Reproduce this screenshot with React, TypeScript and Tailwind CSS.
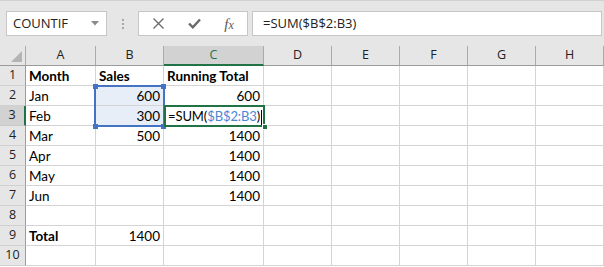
import React from 'react';

const cols = ['A', 'B', 'C', 'D', 'E', 'F', 'G', 'H'];

type Cell = { v?: string; bold?: boolean; right?: boolean };

const rows: Cell[][] = [
  [{ v: 'Month', bold: true }, { v: 'Sales', bold: true }, { v: 'Running Total', bold: true }],
  [{ v: 'Jan' }, { v: '600', right: true }, { v: '600', right: true }],
  [{ v: 'Feb' }, { v: '300', right: true }, {}],
  [{ v: 'Mar' }, { v: '500', right: true }, { v: '1400', right: true }],
  [{ v: 'Apr' }, {}, { v: '1400', right: true }],
  [{ v: 'May' }, {}, { v: '1400', right: true }],
  [{ v: 'Jun' }, {}, { v: '1400', right: true }],
  [{}, {}, {}],
  [{ v: 'Total', bold: true }, { v: '1400', right: true }, {}],
  [{}, {}, {}],
];

const ui = "font-['Open_Sans',sans-serif]";
const cellFont = "font-['Lato',sans-serif]";

export default function App() {
  return (
    <div className="relative w-[604px] h-[267px] overflow-hidden bg-white">
      {/* Toolbar */}
      <div className={`h-[46px] bg-[#e6e6e6] border-t border-[#d2d2d2] flex items-start pt-[10px] ${ui}`}>
        <div className="ml-[6px] w-[101px] h-[25px] bg-white border border-[#c6c6c6] flex items-center justify-between pl-[6px] pr-[7px]">
          <span className="text-[13px] text-[#222] leading-none">COUNTIF</span>
          <svg width="8" height="5" viewBox="0 0 8 5">
            <path d="M0 0 L8 0 L4 4.5 Z" fill="#8a8a8a" />
          </svg>
        </div>
        <div className="w-[31px] h-[25px] flex flex-col items-center justify-center gap-[2px]">
          <div className="w-[2px] h-[2px] bg-[#a6a6a6]" />
          <div className="w-[2px] h-[2px] bg-[#a6a6a6]" />
          <div className="w-[2px] h-[2px] bg-[#a6a6a6]" />
        </div>
        <div className="w-[110px] h-[25px] bg-white border border-[#c6c6c6] flex items-center">
          <div className="w-[38px] flex justify-center">
            <svg width="11" height="11" viewBox="0 0 11 11">
              <path d="M0.5 0.5 L10.5 10.5 M10.5 0.5 L0.5 10.5" stroke="#6a6a6a" strokeWidth="1.3" />
            </svg>
          </div>
          <div className="w-[34px] flex justify-center">
            <svg width="13" height="11" viewBox="0 0 13 11">
              <path d="M1 5.5 L4.8 9.3 L12 1.5" stroke="#6a6a6a" strokeWidth="2.4" fill="none" />
            </svg>
          </div>
          <div className="w-[36px] flex justify-center pt-[2px]">
            <span className="font-['Liberation_Serif',serif] italic text-[15px] text-[#5a5a5a] leading-none">
              f<span className="text-[12px]">x</span>
            </span>
          </div>
        </div>
        <div className="ml-[4px] w-[350px] h-[25px] bg-white border border-[#c6c6c6] flex items-center pl-[10px]">
          <span className="text-[13px] text-[#222] leading-none">=SUM($B$2:B3)</span>
        </div>
      </div>

      {/* Grid */}
      <div className="grid grid-cols-[26px_70px_68px_100px_68px_68px_68px_68px_68px]">
        {/* Header row */}
        <div className="h-[20px] bg-[#e6e6e6] border-r border-[#ababab] border-b border-b-[#9b9b9b] relative">
          <svg className="absolute right-[3px] bottom-[3px]" width="11" height="11" viewBox="0 0 11 11">
            <path d="M11 0 L11 11 L0 11 Z" fill="#b4b4b4" />
          </svg>
        </div>
        {cols.map((c) =>
          c === 'C' ? (
            <div
              key={c}
              className={`h-[20px] bg-[#d2d2d2] border-r border-[#ababab] border-b-2 border-b-[#217346] flex items-center justify-center text-[12.5px] text-[#217346] ${ui}`}
            >
              {c}
            </div>
          ) : (
            <div
              key={c}
              className={`h-[20px] bg-[#e6e6e6] border-r border-[#ababab] border-b border-b-[#9b9b9b] flex items-center justify-center text-[12.5px] text-[#222] ${ui}`}
            >
              {c}
            </div>
          )
        )}

        {rows.map((r, i) => (
          <React.Fragment key={i}>
            {i === 2 ? (
              <div className={`h-[20px] bg-[#d2d2d2] border-r-2 border-[#217346] border-b border-b-[#c8c8c8] flex items-center justify-center text-[12.5px] text-[#222] ${ui}`}>
                {i + 1}
              </div>
            ) : (
              <div className={`h-[20px] bg-[#e6e6e6] border-r border-[#9b9b9b] border-b border-b-[#d0d0d0] flex items-center justify-center text-[12.5px] text-[#222] ${ui}`}>
                {i + 1}
              </div>
            )}
            {cols.map((c, j) => {
              const cell = r[j] || {};
              const inRange = j === 1 && (i === 1 || i === 2);
              return (
                <div
                  key={c}
                  className={`h-[20px] border-r border-b border-[#d4d4d4] px-[3px] pt-[2px] flex items-center ${cell.right ? 'justify-end' : 'justify-start'} ${inRange ? 'bg-[#e8eef8]' : 'bg-white'} ${cellFont} text-[13.5px] text-black ${cell.bold ? 'font-bold' : 'font-normal'} whitespace-nowrap`}
                >
                  {cell.v}
                </div>
              );
            })}
          </React.Fragment>
        ))}
      </div>

      {/* Blue range selection B2:B3 */}
      <div className="absolute left-[94px] top-[85px] w-[71px] h-[42px] border-2 border-[#4472c4] pointer-events-none" />
      <div className="absolute left-[93px] top-[84px] w-[5px] h-[5px] bg-[#4472c4]" />
      <div className="absolute left-[161px] top-[84px] w-[5px] h-[5px] bg-[#4472c4]" />
      <div className="absolute left-[93px] top-[124px] w-[5px] h-[5px] bg-[#4472c4]" />
      <div className="absolute left-[161px] top-[124px] w-[5px] h-[5px] bg-[#4472c4]" />

      {/* Active cell C3 */}
      <div className={`absolute left-[164px] top-[105px] w-[101px] h-[22px] border-2 border-[#217346] bg-white flex items-center pl-[2px] pt-[2px] ${cellFont} text-[13px] tracking-[-0.1px] text-black whitespace-nowrap`}>
        <span>=SUM(</span>
        <span className="text-[#4a86d8]">$B$2:B3</span>
        <span>)</span>
        <span className="ml-[1px] w-[1px] h-[15px] bg-black" />
      </div>
      <div className="absolute left-[262px] top-[124px] w-[6px] h-[6px] bg-[#217346] border border-white" />
    </div>
  );
}
